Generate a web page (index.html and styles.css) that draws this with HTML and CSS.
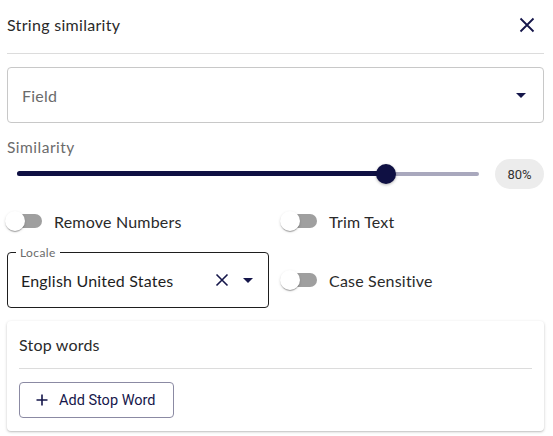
FILE: index.html
```html
<!DOCTYPE html>
<html>
<head>
<meta charset="utf-8">
<link rel="stylesheet" href="styles.css">
</head>
<body>
<div class="panel">
  <header class="header">
    <span class="title">String similarity</span>
    <svg class="close" width="16" height="16" viewBox="0 0 16 16"><path d="M1.5 1.5L14.5 14.5M14.5 1.5L1.5 14.5" stroke="#15164a" stroke-width="1.8" fill="none"/></svg>
  </header>

  <div class="select field">
    <span class="placeholder">Field</span>
    <span class="arrow"></span>
  </div>

  <div class="sim-label">Similarity</div>
  <div class="slider-row">
    <div class="slider">
      <div class="track"></div>
      <div class="fill" style="width: 79.8%"></div>
      <div class="thumb" style="left: 79.8%"></div>
    </div>
    <div class="chip">80%</div>
  </div>

  <div class="grid">
    <label class="switch-label">
      <span class="switch"><span class="sw-track"></span><span class="sw-thumb"></span></span>
      <span class="sw-text">Remove Numbers</span>
    </label>
    <label class="switch-label">
      <span class="switch"><span class="sw-track"></span><span class="sw-thumb"></span></span>
      <span class="sw-text">Trim Text</span>
    </label>

    <div class="select locale">
      <fieldset class="outline"><legend>Locale</legend></fieldset>
      <span class="value">English United States</span>
      <svg class="clear" width="14" height="14" viewBox="0 0 14 14"><path d="M1.5 1.5L12.5 12.5M12.5 1.5L1.5 12.5" stroke="#15164a" stroke-width="1.6" fill="none"/></svg>
      <span class="arrow"></span>
    </div>
    <label class="switch-label">
      <span class="switch"><span class="sw-track"></span><span class="sw-thumb"></span></span>
      <span class="sw-text">Case Sensitive</span>
    </label>
  </div>

  <section class="card">
    <div class="card-head">Stop words</div>
    <div class="card-body">
      <button class="add-btn">
        <svg width="12" height="12" viewBox="0 0 12 12"><path d="M6 0.5V11.5M0.5 6H11.5" stroke="#15164a" stroke-width="1.6" fill="none"/></svg>
        <span>Add Stop Word</span>
      </button>
    </div>
  </section>
</div>
</body>
</html>
```

FILE: styles.css
```css
* { box-sizing: border-box; }
html, body { margin: 0; padding: 0; background: #fff; }
body {
  font-family: "Lato", "Open Sans", sans-serif;
  color: #2a2a2a;
  width: 553px;
  height: 436px;
  overflow: hidden;
}
.panel {
  padding: 0 9px 0 7px;
}
.header {
  height: 54px;
  display: flex;
  align-items: center;
  justify-content: space-between;
  border-bottom: 1px solid #dcdcdc;
  padding-bottom: 4px;
}
.title {
  font-size: 16px;
  letter-spacing: 0.3px;
  color: #2a2a2a;
}
.close { margin-right: 9px; }

.select {
  position: relative;
  display: flex;
  align-items: center;
  height: 56px;
  border-radius: 4px;
  padding: 0 17px 0 14px;
}
.field {
  margin-top: 13px;
  border: 1px solid #c8c8c8;
}
.placeholder {
  flex: 1;
  font-size: 16px;
  letter-spacing: 0.2px;
  color: #6b6b6b;
}
.arrow {
  width: 0;
  height: 0;
  border-left: 5px solid transparent;
  border-right: 5px solid transparent;
  border-top: 5px solid #15164a;
}

.sim-label {
  margin-top: 15px;
  font-size: 15.5px;
  letter-spacing: 0.5px;
  color: #6b6b6b;
  line-height: 18px;
}
.slider-row {
  display: flex;
  align-items: center;
  height: 30px;
  margin-top: 3px;
}
.slider {
  position: relative;
  flex: 1;
  height: 20px;
  margin: 0 16px 0 10px;
}
.track {
  position: absolute;
  left: 0; right: 0; top: 8px;
  height: 4px;
  border-radius: 2px;
  background: #a9a8bd;
}
.fill {
  position: absolute;
  left: 0; top: 7px;
  height: 5px;
  border-radius: 3px;
  background: #0f1043;
}
.thumb {
  position: absolute;
  top: 0;
  width: 20px;
  height: 20px;
  margin-left: -10px;
  border-radius: 50%;
  background: #0f1043;
  box-shadow: 0 1px 3px rgba(0,0,0,0.3);
}
.chip {
  width: 49px;
  height: 30px;
  border-radius: 15px;
  background: #ececec;
  font-family: "Roboto", sans-serif;
  font-size: 13px;
  color: #333;
  display: flex;
  align-items: center;
  justify-content: center;
}

.grid {
  display: grid;
  grid-template-columns: 262px 1fr;
  column-gap: 13px;
  row-gap: 12px;
  margin-top: 13px;
  align-items: center;
}
.switch-label {
  display: flex;
  align-items: center;
  margin-left: -11px;
}
.switch {
  position: relative;
  width: 58px;
  height: 38px;
  flex: none;
}
.sw-track {
  position: absolute;
  left: 12px; top: 12px;
  width: 34px; height: 14px;
  border-radius: 7px;
  background: #9f9f9f;
}
.sw-thumb {
  position: absolute;
  left: 9px; top: 9px;
  width: 20px; height: 20px;
  border-radius: 50%;
  background: #fff;
  box-shadow: 0 2px 1px -1px rgba(0,0,0,0.2), 0 1px 1px 0 rgba(0,0,0,0.14), 0 1px 3px 0 rgba(0,0,0,0.12);
}
.sw-text {
  font-size: 16px;
  letter-spacing: 0.2px;
  color: #2a2a2a;
}

.locale {
  padding-right: 16px;
}
.outline {
  position: absolute;
  inset: -5px 0 0 0;
  margin: 0;
  padding: 0 8px;
  border: 1px solid #1e1e1e;
  border-radius: 4px;
  pointer-events: none;
}
.outline legend {
  padding: 0 4px;
  font-size: 12px;
  letter-spacing: 0.4px;
  color: #6b6b6b;
  line-height: 11px;
}
.value {
  flex: 1;
  font-size: 16px;
  letter-spacing: 0.2px;
  color: #1e1e1e;
}
.clear { margin-right: 14px; }

.card {
  margin-top: 13px;
  border-radius: 4px;
  box-shadow: 0 1px 3px rgba(0,0,0,0.22), 0 1px 1px rgba(0,0,0,0.06);
  padding: 0 12px 13px;
}
.card-head {
  height: 48px;
  display: flex;
  align-items: center;
  border-bottom: 1px solid #dcdcdc;
  font-size: 16px;
  letter-spacing: 0.2px;
  color: #2a2a2a;
}
.card-body {
  padding-top: 13px;
}
.add-btn {
  display: flex;
  align-items: center;
  gap: 11px;
  height: 36px;
  width: 155px;
  padding: 0 10px 0 16px;
  border: 1px solid #8b8aa3;
  border-radius: 4px;
  background: #fff;
  font-family: "Roboto", sans-serif;
  font-size: 14.5px;
  color: #15164a;
}
```
